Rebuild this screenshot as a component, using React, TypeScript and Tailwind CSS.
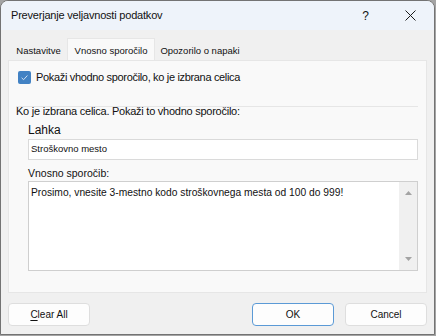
import React from 'react';

const font = { fontFamily: '"Liberation Sans", Arial, sans-serif' };

const Tab: React.FC<{ label: string; active?: boolean; w: string }> = ({ label, active, w }) => (
    <div
        className={
            active
                ? `flex h-[22px] ${w} items-center justify-center whitespace-nowrap border border-b-0 border-[#e6e6e6] bg-[#f9f9f9] pt-[4px] text-[9.5px] text-[#111]`
                : `flex h-[20px] ${w} items-center justify-center whitespace-nowrap pt-[3px] text-[9.5px] text-[#111]`
        }
    >
        {label}
    </div>
);

const Button: React.FC<{ label: React.ReactNode; primary?: boolean }> = ({ label, primary }) => (
    <button
        className={
            'flex h-[23px] w-[82px] items-center justify-center rounded-[4px] bg-[#fdfdfd] text-[10px] text-[#111] ' +
            (primary ? 'border border-[#5b9ad6]' : 'border border-[#dedede]')
        }
    >
        {label}
    </button>
);

export default function App() {
    return (
        <div className="h-[336px] w-[436px] bg-[#a4a4a4]" style={font}>
            <div className="flex h-[335px] w-[435px] flex-col overflow-hidden rounded-t-[8px] border border-[#737373] bg-[#f0f0f0]">
                <div className="flex h-[29px] shrink-0 items-center justify-between bg-[#eef3fa] pl-[10px]">
                    <span className="text-[11px] tracking-[-0.2px] text-[#111]">Preverjanje veljavnosti podatkov</span>
                    <div className="flex items-center">
                        <span className="mr-[36px] text-[12px] text-[#111]">?</span>
                        <svg width="11" height="11" viewBox="0 0 11 11" className="mr-[18px]">
                            <path d="M0.5 0.5 L10.5 10.5 M10.5 0.5 L0.5 10.5" stroke="#1a1a1a" strokeWidth="1" />
                        </svg>
                    </div>
                </div>
                <div className="flex flex-1 flex-col px-[7px] pt-[8px]">
                    <div className="flex h-[22px] items-end pl-[2px]">
                        <Tab label="Nastavitve" w="w-[57px]" />
                        <Tab label="Vnosno sporočilo" active w="w-[88px]" />
                        <Tab label="Opozorilo o napaki" w="w-[90px]" />
                    </div>
                    <div className="flex h-[233px] flex-col border border-[#e6e6e6] bg-[#f9f9f9] pl-[9px] pr-[8px]">
                        <div className="mt-[10px] flex h-[13px] items-center gap-[5px]">
                            <div className="flex h-[13px] w-[13px] items-center justify-center rounded-[2px] bg-[#4282c4]">
                                <svg width="9" height="9" viewBox="0 0 9 9">
                                    <path d="M1.6 4.8 L3.6 6.7 L7.4 2.5" stroke="#d2e2f3" strokeWidth="1" fill="none" />
                                </svg>
                            </div>
                            <span className="whitespace-nowrap text-[11px] leading-[13px] tracking-[-0.33px] text-[#111]">
                                Pokaži vhodno sporočilo, ko je izbrana celica
                            </span>
                        </div>
                        <div className="relative mt-[22px] h-[14px]">
                            <div className="absolute left-[-2px] right-0 top-0 h-px bg-[#e6e6e6]" />
                            <span className="absolute left-[-2px] top-[-2px] whitespace-nowrap text-[11px] leading-[14px] tracking-[-0.25px] text-[#111]">
                                Ko je izbrana celica. Pokaži to vhodno sporočilo:
                            </span>
                        </div>
                        <div className="ml-[10px] flex flex-col">
                            <span className="mt-[3px] text-[12px] leading-[15px] text-[#111]">Lahka</span>
                            <div className="mt-[1px] flex h-[21px] items-center border border-[#dadada] bg-white pl-[2px] text-[9.5px] text-[#111]">
                                Stroškovno mesto
                            </div>
                            <span className="mt-[7px] text-[10.5px] leading-[13px] text-[#111]">Vnosno sporočib:</span>
                            <div className="mt-[1px] flex h-[90px] border border-[#cfcfcf] bg-white">
                                <div className="flex-1 whitespace-nowrap pl-[2px] pt-[4px] text-[10.25px] leading-[13px] text-[#111]">
                                    Prosimo, vnesite 3-mestno kodo stroškovnega mesta od 100 do 999!
                                </div>
                                <div className="flex w-[18px] flex-col items-center justify-between bg-[#f0f0f0] py-[9px]">
                                    <svg width="7" height="4" viewBox="0 0 7 4">
                                        <path d="M0 4 L3.5 0 L7 4 Z" fill="#a3a3a3" />
                                    </svg>
                                    <svg width="7" height="4" viewBox="0 0 7 4">
                                        <path d="M0 0 L3.5 4 L7 0 Z" fill="#a3a3a3" />
                                    </svg>
                                </div>
                            </div>
                        </div>
                    </div>
                    <div className="mt-[10px] flex items-center">
                        <Button
                            label={
                                <span>
                                    <span className="underline underline-offset-2">C</span>lear All
                                </span>
                            }
                        />
                        <div className="flex-1" />
                        <Button label="OK" primary />
                        <div className="w-[11px]" />
                        <Button label="Cancel" />
                    </div>
                </div>
            </div>
        </div>
    );
}
